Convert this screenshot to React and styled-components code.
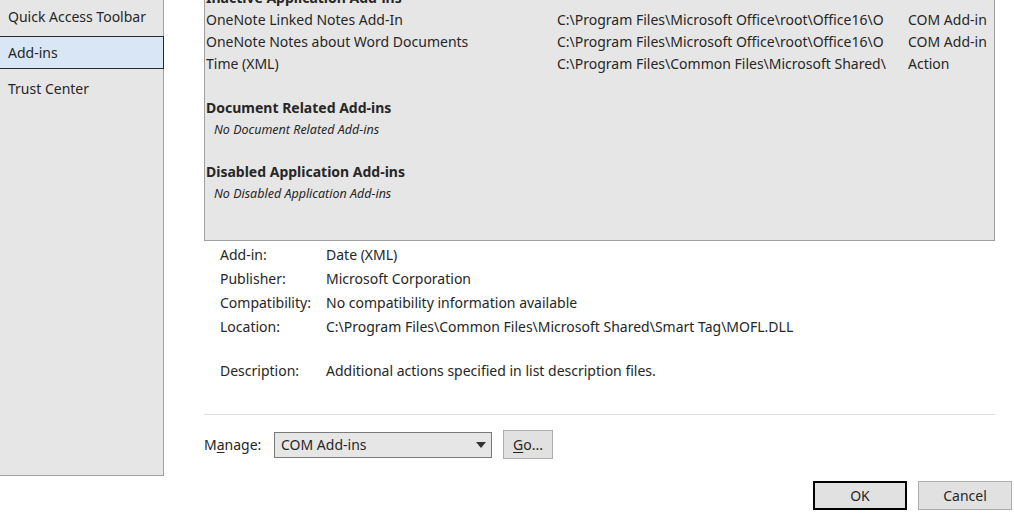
import React from "react";
import styled, { createGlobalStyle } from "styled-components";

const Global = createGlobalStyle`
  html, body {
    margin: 0;
    padding: 0;
    background: #ffffff;
    overflow: hidden;
  }
  body {
    font-family: "Noto Sans", "Open Sans", sans-serif;
    font-size: 14px;
    color: #262626;
  }
`;

const Dialog = styled.div`
  width: 1014px;
  height: 518px;
  display: flex;
  flex-direction: column;
  overflow: hidden;
`;

const Top = styled.div`
  display: flex;
  height: 476px;
`;

const Sidebar = styled.div`
  width: 164px;
  flex: none;
  background: #e6e6e6;
  border-right: 1px solid #a0a0a0;
  border-bottom: 1px solid #a0a0a0;
  box-sizing: border-box;
  display: flex;
  flex-direction: column;
  gap: 3px;
`;

const NavItem = styled.div`
  height: 33px;
  box-sizing: border-box;
  display: flex;
  align-items: center;
  padding-left: 8px;
  margin-right: -1px;
  border: 1px solid ${(p) => (p.selected ? "#2b2b2b" : "transparent")};
  border-left: none;
  background: ${(p) => (p.selected ? "#d8e6f5" : "transparent")};
  white-space: nowrap;
`;

const Main = styled.div`
  flex: 1;
  padding-left: 40px;
  padding-right: 19px;
  display: flex;
  flex-direction: column;
`;

const ListBox = styled.div`
  margin-top: -14px;
  height: 255px;
  box-sizing: border-box;
  background: #e6e6e6;
  border: 1px solid #a0a0a0;
  padding-left: 1px;
  overflow: hidden;
`;

const Row = styled.div`
  display: grid;
  grid-template-columns: 335px 335px 1fr;
  column-gap: 16px;
  height: 22px;
  line-height: 22px;
  white-space: nowrap;
`;

const Cell = styled.div`
  overflow: hidden;
`;

const Heading = styled.div`
  height: 22px;
  line-height: 22px;
  font-weight: 700;
  white-space: nowrap;
`;

const Empty = styled.div`
  height: 21px;
  line-height: 21px;
  font-style: italic;
  font-size: 12.5px;
  padding-left: 8px;
`;

const Gap = styled.div`
  height: ${(p) => p.h}px;
`;

const Details = styled.div`
  margin-top: 2px;
  padding-left: 16px;
  display: flex;
  flex-direction: column;
`;

const DetailRow = styled.div`
  display: grid;
  grid-template-columns: 106px 1fr;
  height: 24px;
  line-height: 24px;
  white-space: nowrap;
  margin-top: ${(p) => (p.spaced ? 20 : 0)}px;
`;

const Separator = styled.div`
  margin-top: 31px;
  border-top: 1px solid #dcdcdc;
`;

const ManageRow = styled.div`
  margin-top: 15px;
  height: 29px;
  display: flex;
  align-items: center;
`;

const ManageLabel = styled.span`
  width: 70px;
`;

const Select = styled.div`
  width: 218px;
  height: 26px;
  box-sizing: border-box;
  border: 1px solid #7a7a7a;
  background: #e6e6e6;
  display: flex;
  align-items: center;
  justify-content: space-between;
  padding: 0 5px 0 6px;
`;

const Button = styled.div`
  height: 29px;
  width: ${(p) => p.w}px;
  box-sizing: border-box;
  background: #e1e1e1;
  border: ${(p) => (p.primary ? "2px solid #000" : "1px solid #adadad")};
  display: flex;
  align-items: center;
  justify-content: center;
`;

const GoButton = styled(Button)`
  margin-left: 11px;
`;

const Footer = styled.div`
  display: flex;
  justify-content: flex-end;
  gap: 11px;
  padding-top: 5px;
  padding-right: 2px;
`;

const U = styled.span`
  text-decoration: underline;
  text-underline-offset: 2px;
`;

const Arrow = () => (
  <svg width="10" height="6" viewBox="0 0 10 6">
    <path d="M0 0 H10 L5 6 Z" fill="#333" />
  </svg>
);

const inactive = [
  ["OneNote Linked Notes Add-In", "C:\\Program Files\\Microsoft Office\\root\\Office16\\O", "COM Add-in"],
  ["OneNote Notes about Word Documents", "C:\\Program Files\\Microsoft Office\\root\\Office16\\O", "COM Add-in"],
  ["Time (XML)", "C:\\Program Files\\Common Files\\Microsoft Shared\\", "Action"],
];

const details = [
  ["Add-in:", "Date (XML)"],
  ["Publisher:", "Microsoft Corporation"],
  ["Compatibility:", "No compatibility information available"],
  ["Location:", "C:\\Program Files\\Common Files\\Microsoft Shared\\Smart Tag\\MOFL.DLL"],
];

export default function App() {
  return (
    <>
      <Global />
      <Dialog>
        <Top>
          <Sidebar>
            <NavItem>Quick Access Toolbar</NavItem>
            <NavItem selected>Add-ins</NavItem>
            <NavItem>Trust Center</NavItem>
          </Sidebar>
          <Main>
            <ListBox>
              <Heading>Inactive Application Add-ins</Heading>
              {inactive.map((r) => (
                <Row key={r[0]}>
                  <Cell>{r[0]}</Cell>
                  <Cell>{r[1]}</Cell>
                  <Cell>{r[2]}</Cell>
                </Row>
              ))}
              <Gap h={22} />
              <Heading>Document Related Add-ins</Heading>
              <Empty>No Document Related Add-ins</Empty>
              <Gap h={21} />
              <Heading>Disabled Application Add-ins</Heading>
              <Empty>No Disabled Application Add-ins</Empty>
            </ListBox>
            <Details>
              {details.map((d) => (
                <DetailRow key={d[0]}>
                  <span>{d[0]}</span>
                  <span>{d[1]}</span>
                </DetailRow>
              ))}
              <DetailRow spaced>
                <span>Description:</span>
                <span>Additional actions specified in list description files.</span>
              </DetailRow>
            </Details>
            <Separator />
            <ManageRow>
              <ManageLabel>
                M<U>a</U>nage:
              </ManageLabel>
              <Select>
                <span>COM Add-ins</span>
                <Arrow />
              </Select>
              <GoButton w={50}>
                <span>
                  <U>G</U>o...
                </span>
              </GoButton>
            </ManageRow>
          </Main>
        </Top>
        <Footer>
          <Button primary w={94}>
            OK
          </Button>
          <Button w={94}>Cancel</Button>
        </Footer>
      </Dialog>
    </>
  );
}
